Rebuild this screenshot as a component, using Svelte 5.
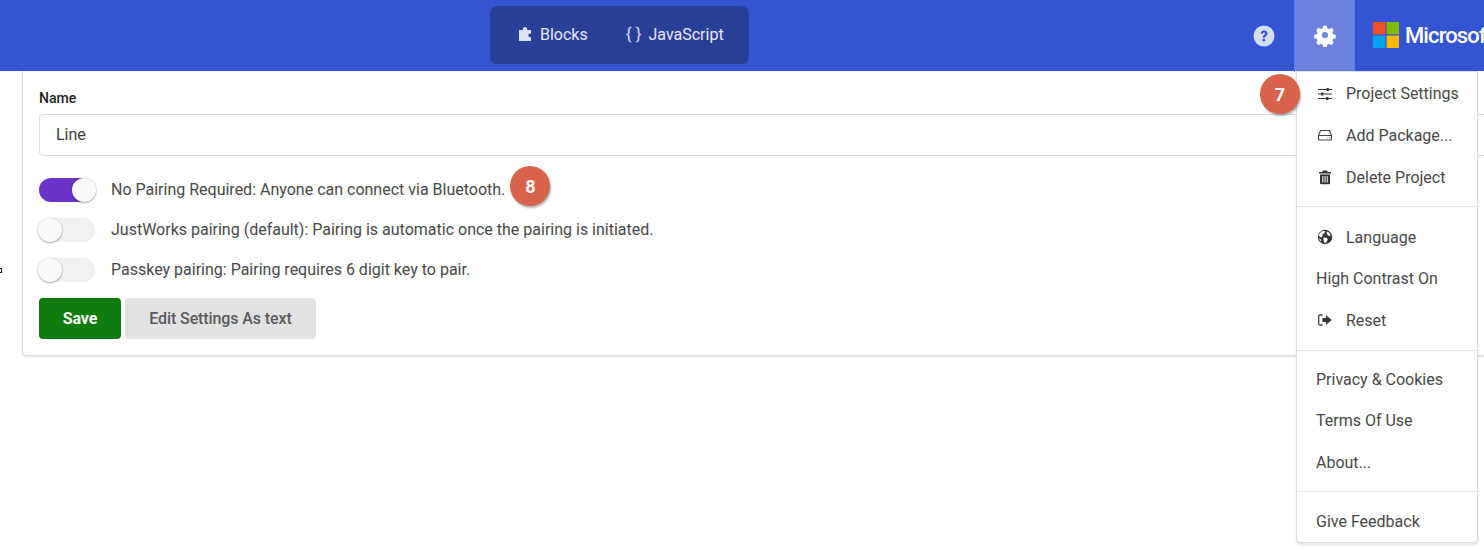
<script>
  const toggles = [
    { text: 'No Pairing Required: Anyone can connect via Bluetooth.', on: true, badge: '8' },
    { text: 'JustWorks pairing (default): Pairing is automatic once the pairing is initiated.', on: false },
    { text: 'Passkey pairing: Pairing requires 6 digit key to pair.', on: false }
  ];
  const groups = [
    [
      { label: 'Project Settings', icon: 'sliders' },
      { label: 'Add Package...', icon: 'drive' },
      { label: 'Delete Project', icon: 'trash' }
    ],
    [
      { label: 'Language', icon: 'globe' },
      { label: 'High Contrast On' },
      { label: 'Reset', icon: 'signout' }
    ],
    [{ label: 'Privacy & Cookies' }, { label: 'Terms Of Use' }, { label: 'About...' }],
    [{ label: 'Give Feedback' }]
  ];
</script>

<div class="page">
  <header class="bar">
    <div class="tabs">
      <span class="tab">
        <svg class="ti" viewBox="1 1 9.500 12" preserveAspectRatio="none"><path d="M1 3.500h3.200V2.600C4.200 1.600 5 1 5.800 1s1.600.6 1.600 1.600v.9h3.100v3.100h-.6c-1 0-1.500.7-1.500 1.500s.5 1.600 1.500 1.600h.6V13H1z" fill="#dfe3f5"/></svg>
        Blocks
      </span>
      <span class="tab js"><span class="braces">{'{ }'}</span>JavaScript</span>
    </div>
    <div class="bar-right">
      <span class="help">
        <svg viewBox="0 0 22 22" width="22" height="22"><circle cx="11" cy="11" r="10.500" fill="#d6dcf5"/><path d="M7.600 8.600c.2-2 1.600-3.100 3.500-3.100s3.400 1.100 3.400 2.900c0 2.600-2.600 2.400-2.600 4.400H9.700c0-3 2.400-2.900 2.400-4.300 0-.6-.4-1-1.100-1-.8 0-1.100.5-1.200 1.300z" fill="#3454d1"/><rect x="9.700" y="13.900" width="2.300" height="2.400" fill="#3454d1"/></svg>
      </span>
      <span class="gear">
        <svg viewBox="0 0 24 24" width="24" height="24"><path fill="#fff" fill-rule="evenodd" d="M10 1.500h4l.6 3a8 8 0 0 1 2 .9l2.600-1.700 2.800 2.800-1.700 2.600a8 8 0 0 1 .9 2l3 .6v4l-3 .6a8 8 0 0 1-.9 2l1.700 2.600-2.800 2.800-2.600-1.700a8 8 0 0 1-2 .9l-.6 3h-4l-.6-3a8 8 0 0 1-2-.9l-2.600 1.700-2.800-2.800 1.700-2.600a8 8 0 0 1-.9-2l-3-.6v-4l3-.6a8 8 0 0 1 .9-2L2 6.500l2.800-2.800 2.600 1.700a8 8 0 0 1 2-.9zM12 8.500a3.500 3.500 0 1 0 0 7 3.500 3.500 0 0 0 0-7z" transform="translate(1.400 1.400) scale(.88)"/></svg>
      </span>
      <span class="brand">
        <svg class="logo" viewBox="0 0 26 26" width="26" height="26"><rect width="12.400" height="12.400" fill="#f25022"/><rect x="13.600" width="12.400" height="12.400" fill="#7fba00"/><rect y="13.600" width="12.400" height="12.400" fill="#00a4ef"/><rect x="13.600" y="13.600" width="12.400" height="12.400" fill="#ffb900"/></svg>
        <span class="ms">Microsoft</span>
      </span>
    </div>
  </header>

  <main class="card">
    <label class="name-label" for="name">Name</label>
    <input id="name" class="name" value="Line" />
    <div class="toggles">
      {#each toggles as t}
        <div class="row">
          <span class="switch" class:on={t.on}><span class="knob"></span></span>
          <span class="row-text">{t.text}</span>
          {#if t.badge}<span class="badge inline-badge">{t.badge}</span>{/if}
        </div>
      {/each}
    </div>
    <div class="actions">
      <button class="save">Save</button>
      <button class="edit">Edit Settings As text</button>
    </div>
  </main>

  <nav class="menu">
    {#each groups as g, i}
      {#if i > 0}<div class="sep"></div>{/if}
      <div class="group">
        {#each g as item}
          <div class="item">
            {#if item.icon}
              <span class="mi">
                {#if item.icon === 'sliders'}
                  <svg viewBox="0 -1 16 16" width="16" height="16" fill="none" stroke="#3a3a3a" stroke-width="1.200"><path d="M1 3.500h14M1 8h14M1 12.500h14"/><rect x="9.500" y="2" width="2.400" height="3" fill="#3a3a3a" stroke="none"/><rect x="4" y="6.500" width="2.400" height="3" fill="#3a3a3a" stroke="none"/><rect x="9" y="11" width="2.400" height="3" fill="#3a3a3a" stroke="none"/></svg>
                {:else if item.icon === 'drive'}
                  <svg viewBox="0 0 16 16" width="16" height="16" fill="none" stroke="#444" stroke-width="1.100"><path d="M3.500 3.500h9l2 5v3.500a1 1 0 0 1-1 1h-11a1 1 0 0 1-1-1V8.500zM1.500 8.500h13"/><path d="M10.500 10.800h.8M12.500 10.800h.8" stroke-width="1"/></svg>
                {:else if item.icon === 'trash'}
                  <svg viewBox="0 0 16 16" width="16" height="16"><path fill="#333" fill-rule="evenodd" d="M6 1.500h4l.8 1.500H14v1.600H2V3h3.200zM3 5.500h10V14a1.200 1.200 0 0 1-1.200 1.200H4.200A1.200 1.200 0 0 1 3 14zM5.300 7v6.500h1V7zm2.200 0v6.500h1V7zm2.200 0v6.500h1V7z"/></svg>
                {:else if item.icon === 'globe'}
                  <svg viewBox="0 0 16 16" width="16" height="16"><circle cx="8" cy="8" r="7.200" fill="#333"/><path fill="#fff" d="M3.400 3.400C5 1.900 6.800 1.700 8 2l-.4 2.300-2 .8V7L4.200 8.600 1.900 7C2 5.600 2.500 4.300 3.400 3.400zM6.500 8.300l3.300.6 1 1.700-1.600 3-1.700.4-1-2.800zM9.600 2.200c1.900.6 3.600 2.300 4.100 4.100l-1.800 1-2-2.300zM2 9.300l1.800 1 .7 2.500C3.200 12 2.300 10.600 2 9.300z"/></svg>
                {:else if item.icon === 'signout'}
                  <svg viewBox="0 0 16 16" width="16" height="16"><path fill="none" stroke="#444" stroke-width="1.300" d="M5.500 3H3a1.300 1.300 0 0 0-1.300 1.300v7.400A1.300 1.300 0 0 0 3 13h2.500"/><path fill="#333" d="M5.500 6H9V3.200L14.800 8 9 12.800V10H5.500z"/></svg>
                {/if}
              </span>
            {/if}
            <span>{item.label}</span>
          </div>
        {/each}
      </div>
    {/each}
  </nav>

  <span class="badge seven">7</span>
  <span class="tiny"></span>
</div>

<style>
  :global(body) { margin: 0; background: #fff; overflow: hidden; }
  .page {
    position: relative;
    width: 1484px;
    height: 549px;
    overflow: hidden;
    font-family: Roboto, "Liberation Sans", sans-serif;
    color: #3c3c3c;
    font-size: 16px;
  }
  .bar {
    height: 71px;
    background: #3454d1;
    display: flex;
    align-items: flex-start;
    padding-left: 490px;
    box-sizing: border-box;
  }
  .tabs {
    margin-top: 6px;
    width: 259px;
    height: 58px;
    background: #2a4098;
    border-radius: 7px;
    display: flex;
    align-items: center;
    padding: 0 0 2px 29px;
    box-sizing: border-box;
    color: #e6e9f7;
    font-size: 16px;
  }
  .tab { display: inline-flex; align-items: center; }
  .ti { width: 12px; height: 14px; margin-right: 9px; flex-shrink: 0; }
  .js { margin-left: 38px; }
  .braces { margin-right: 7px; color: #d6dbf2; font-size: 17px; }
  .bar-right { margin-left: auto; display: flex; height: 71px; }
  .help { width: 61px; display: flex; align-items: center; justify-content: center; }
  .gear {
    position: relative;
    width: 61px;
    box-sizing: border-box;
    background: #6b83de;
    border-left: 1px solid #4c80ff;
    border-right: 1px solid #4c80ff;
    display: flex;
    align-items: center;
    justify-content: center;
    padding-bottom: 1px;
  }
  .gear::before {
    content: '';
    position: absolute;
    left: -1px;
    top: 71px;
    width: 1px;
    height: 1px;
    background: #4c80ff;
  }
  .brand { width: 129px; display: flex; align-items: center; padding: 0 0 1px 18px; box-sizing: border-box; overflow: hidden; }
  .logo { flex-shrink: 0; }
  .ms { color: #fff; font-family: Roboto, sans-serif; font-weight: 500; font-size: 22px; margin-left: 6px; letter-spacing: -0.9px; white-space: nowrap; }
  .card {
    margin-left: 22px;
    width: 1500px;
    height: 285px;
    box-sizing: border-box;
    background: #fff;
    border: 1px solid #dedede;
    border-top: 0;
    border-radius: 0 0 4px 4px;
    box-shadow: 0 1px 2px rgba(0, 0, 0, .12);
    padding: 19px 16px 0;
  }
  .name-label { display: block; font-size: 14px; font-weight: 500; color: #222; line-height: 16px; margin-bottom: 8px; }
  .name {
    display: block;
    width: 100%;
    height: 42px;
    box-sizing: border-box;
    border: 1px solid #dedede;
    border-radius: 4px;
    padding: 0 16px 2px;
    font: 16px Roboto, sans-serif;
    color: #3c3c3c;
    outline: none;
  }
  .toggles { margin-top: 22px; display: flex; flex-direction: column; gap: 16px; }
  .row { display: flex; align-items: center; height: 24px; }
  .switch {
    width: 56px;
    height: 24px;
    border-radius: 12px;
    background: #f0f0f0;
    display: flex;
    flex-shrink: 0;
    margin-right: 16px;
    align-items: center;
  }
  .switch.on { background: #6a33c8; justify-content: flex-end; }
  .knob {
    width: 24px;
    height: 24px;
    flex-shrink: 0;
    margin: 0 -1px;
    border-radius: 50%;
    background: #fafafa;
    box-shadow: 0 1px 2px rgba(0, 0, 0, .3), 0 0 0 1px rgba(0, 0, 0, .06);
  }
  .row-text { font-size: 16px; color: #484848; padding-bottom: 2px; }
  .actions { margin-top: 16px; display: flex; gap: 4px; }
  button {
    height: 41px;
    border: 0;
    border-radius: 4px;
    font: 500 16px Roboto, sans-serif;
    padding: 0;
  }
  .save { width: 82px; background: #107c10; color: #fff; font-weight: 700; letter-spacing: -.1px; }
  .edit { width: 191px; background: #e1e2e4; color: #5a5a5a; letter-spacing: -.1px; }
  .menu {
    position: absolute;
    left: 1296px;
    top: 71px;
    width: 182px;
    height: 472px;
    box-sizing: border-box;
    background: #fff;
    border: 1px solid #dedede;
    border-radius: 0 0 4px 4px;
    box-shadow: 0 2px 3px rgba(0, 0, 0, .1);
  }
  .sep { height: 1px; background: #e6e6e6; margin: 8px 0 7.500px; }
  .item { height: 41.500px; display: flex; align-items: center; padding-left: 19px; font-size: 16px; color: #484848; }
  .group:nth-of-type(1) .item { height: 42px; }
  .group:nth-of-type(3) { padding: 2px 0 1px; }
  .group:nth-of-type(7) { padding-top: 1px; }
  .mi { width: 30px; flex-shrink: 0; display: flex; align-items: center; padding-left: 1px; box-sizing: border-box; }
  .badge {
    width: 40px;
    height: 40px;
    border-radius: 50%;
    background: #d9634a;
    color: #fff;
    font-weight: 700;
    font-size: 18px;
    display: flex;
    align-items: center;
    justify-content: center;
    box-shadow: 1px 2px 2px rgba(0, 0, 0, .3);
    flex-shrink: 0;
  }
  .inline-badge { margin: -8px 0 0 5px; }
  .seven { position: absolute; left: 1260px; top: 74px; }
  .tiny { position: absolute; left: -2px; top: 268px; width: 2px; height: 3px; border: 1px solid #111; }
</style>
